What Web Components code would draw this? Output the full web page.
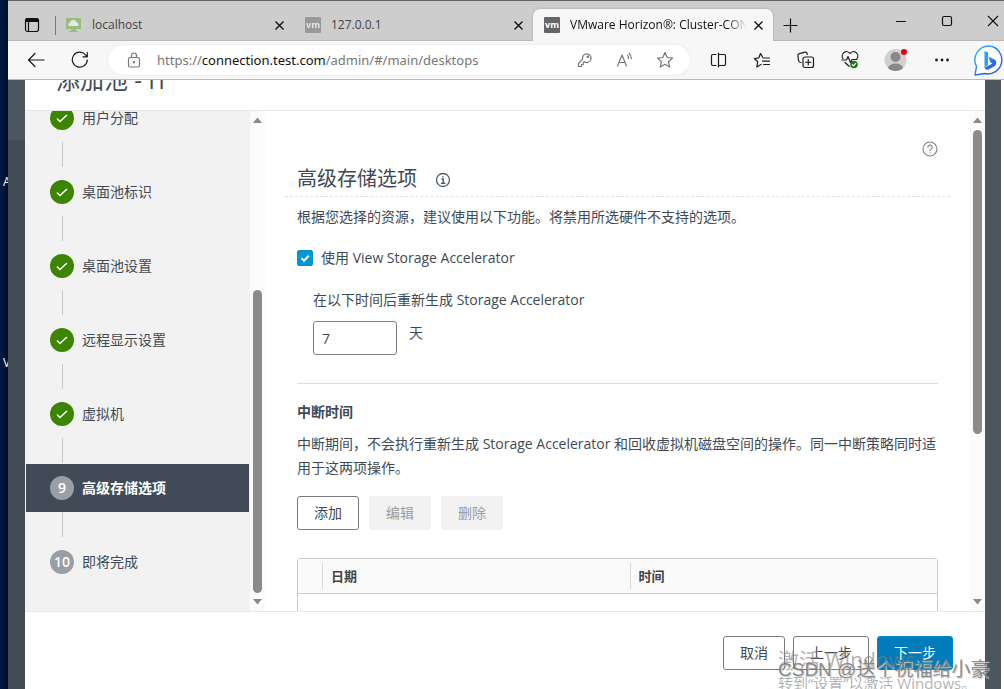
<!DOCTYPE html>
<html lang="zh-CN">
<head>
<meta charset="utf-8">
<title>VMware Horizon</title>
<style>
  html, body { margin: 0; height: 100%; }
  body {
    display: flex; overflow: hidden; background: #fff; color: #404a56;
    font: 14px/24px "Open Sans", "Noto Sans CJK SC", sans-serif;
  }
</style>
</head>
<body>
<desktop-edge></desktop-edge>
<browser-window>
  <tab-strip slot="tabs">
    <browser-tab kind="desktop" class="first">localhost</browser-tab>
    <browser-tab kind="vm">127.0.0.1</browser-tab>
    <browser-tab kind="vm" active>VMware Horizon®: Cluster-CONNECTION</browser-tab>
  </tab-strip>
  <nav-toolbar slot="toolbar"></nav-toolbar>
  <pool-wizard>
    <span slot="title">添加池 - IT</span>
    <wizard-step slot="steps" state="done">用户分配</wizard-step>
    <wizard-step slot="steps" state="done">桌面池标识</wizard-step>
    <wizard-step slot="steps" state="done">桌面池设置</wizard-step>
    <wizard-step slot="steps" state="done">远程显示设置</wizard-step>
    <wizard-step slot="steps" state="done">虚拟机</wizard-step>
    <wizard-step slot="steps" number="9" state="current">高级存储选项</wizard-step>
    <wizard-step slot="steps" number="10" state="last">即将完成</wizard-step>
    <storage-options></storage-options>
    <ui-button slot="footer">取消</ui-button>
    <ui-button slot="footer">上一步</ui-button>
    <ui-button slot="footer" kind="primary">下一步</ui-button>
  </pool-wizard>
</browser-window>
<screen-watermark></screen-watermark>

<script>
const define = (name, html, setup) => {
  const template = document.createElement('template');
  template.innerHTML = html;
  customElements.define(name, class extends HTMLElement {
    constructor() {
      super();
      this.attachShadow({ mode: 'open' }).append(template.content.cloneNode(true));
    }
    connectedCallback() { if (setup) setup(this, this.shadowRoot); }
  });
};

define('desktop-edge', `
<style>
  :host { position: relative; flex: none; width: 8px; overflow: hidden; color: #fff;
    background: linear-gradient(90deg, #001a42, #000f2a); font: 12px/16px "Open Sans", sans-serif; }
  span { position: absolute; left: 3px; }
</style>
<span style="top:174px">A</span><span style="top:355px">V</span>`);

define('browser-window', `
<style>
  :host { flex: 1; min-width: 0; display: flex; flex-direction: column; border-top: 1px solid #656366; }
</style>
<slot name="tabs"></slot><slot name="toolbar"></slot><slot></slot>`);

define('tab-strip', `
<style>
  :host { display: flex; flex: none; height: 40px; background: #cdcdcd; box-shadow: inset 0 -1px #b9b9b9; color: #111; font: 12px/16px "Open Sans", sans-serif; }
  button { border: 0; padding: 0; background: none; color: inherit; display: flex; align-items: center; justify-content: center; }
  .menu { width: 47px; padding-top: 8px; }
  .add { width: 35px; padding-top: 8px; }
  .window { margin-left: auto; display: flex; flex: none; margin-right: -12px; }
  .window button { width: 46px; }
  svg { display: block; fill: none; stroke: #111; }
</style>
<button class="menu" aria-label="标签页菜单"><svg width="16" height="16"><rect x="1.5" y="1.5" width="13" height="13" rx="2.2" stroke-width="1.2"/><path d="M1 3.8Q1 1 3.8 1h8.400Q15 1 15 3.800V5H1z" fill="#111" stroke="none"/><path d="M4.500 5v9.500" stroke-width="1.200"/></svg></button>
<slot></slot>
<button class="add" aria-label="新建标签页"><svg width="15" height="15"><path d="M7.500 .5v14M.5 7.500h14" stroke-width="1.200"/></svg></button>
<div class="window">
  <button aria-label="最小化"><svg width="12" height="12"><path d="M1 6.500h10"/></svg></button>
  <button aria-label="最大化"><svg width="12" height="12"><rect x="1.500" y="1.500" width="9" height="9" rx="1.500" stroke-width="1.200"/></svg></button>
  <button aria-label="关闭"><svg width="12" height="12"><path d="M1 1l10 10M11 1L1 11" stroke-width="1.100"/></svg></button>
</div>`);

define('browser-tab', `
<style>
  :host { display: flex; align-items: center; box-sizing: border-box; flex: 0 1 239px; min-width: 0; height: 32px;
    margin-top: 8px; padding: 0 9px 0 11px; color: #444; position: relative; }
  :host(.first)::before { content: ""; position: absolute; left: 0; top: 7px; height: 19px; border-left: 1px solid #777; }
  :host([active]) { flex-basis: 240px; background: #f7f7f7; border-radius: 7px 7px 0 0; color: #111; box-shadow: 0 0 2px #999; clip-path: inset(-3px -3px 0 -3px); }
  .icon { flex: none; width: 16px; height: 16px; opacity: .5; }
  :host([active]) .icon { opacity: 1; }
  .label { flex: 1; min-width: 0; overflow: hidden; white-space: nowrap; margin: 0 6px 0 10px; }
  :host([active]) .label { -webkit-mask-image: linear-gradient(90deg, #000 calc(100% - 20px), transparent); }
  button { flex: none; border: 0; background: none; padding: 0; width: 11px; height: 11px; }
  svg { display: block; }
</style>
<span class="icon"></span><span class="label"><slot></slot></span>
<button aria-label="关闭标签页"><svg width="11" height="11"><path d="M1.500 1.500l8 8M9.500 1.500l-8 8" stroke="#111" stroke-width="1.400"/></svg></button>`,
(host, root) => {
  root.querySelector('.icon').innerHTML = host.getAttribute('kind') === 'vm'
    ? '<svg width="16" height="16"><rect width="16" height="16" rx="1" fill="#666"/><text x="8" y="10.500" text-anchor="middle" font-family="Open Sans" font-weight="700" font-size="9" fill="#fff">vm</text></svg>'
    : '<svg width="16" height="16"><path d="M0 1h15v11H10v2h2v1H3v-1h2v-2H0z" fill="#5fb030"/><path d="M3 9a2 2 0 0 1 1-3.500 3.500 3.500 0 0 1 6.800 0A2 2 0 0 1 12 9z" fill="#fff"/></svg>';
});

define('nav-toolbar', `
<style>
  :host { display: flex; align-items: center; flex: none; height: 38px; background: #f7f7f7; border-bottom: 1px solid #b9b9b9; padding-left: 6px; }
  button { flex: none; border: 0; background: none; padding: 0; width: 44px; height: 30px; display: flex; align-items: center; justify-content: center; }
  .wide { width: 46px; }
  .bing { width: 40px; justify-content: flex-end; height: 34px; }
  form { flex: 1; min-width: 0; display: flex; align-items: center; margin: 0 6px; height: 30px; border-radius: 15px; background: #fff; box-shadow: 0 0 3px #e4e4e4; padding: 0 5px 0 18px; }
  form button { width: 40px; }
  form .lock { width: 16px; }
  .url { flex: 1; min-width: 0; margin-left: 15px; color: #767676; text-decoration: none; white-space: nowrap; overflow: hidden; font: 13px/20px "Noto Sans", sans-serif; }
  b { font-weight: 400; color: #111; }
  svg { display: block; fill: none; stroke: #1b1b1b; stroke-width: 1.200; stroke-linecap: round; stroke-linejoin: round; }
  form svg { stroke: #777; }
</style>
<button aria-label="后退"><svg width="18" height="18"><path d="M17 9H1.500M8 2.500L1.500 9 8 15.500"/></svg></button>
<button aria-label="刷新"><svg width="18" height="18"><path d="M16.300 9A7.500 7.500 0 1 1 14.500 3.800L16 5.500M16.300 1.500v4.300H12"/></svg></button>
<form>
  <button type="button" class="lock" aria-label="站点信息"><svg width="14" height="17"><rect x="1.500" y="5.500" width="11" height="9.500" rx="1.500"/><path d="M4.500 5.500V3.500a2.500 2.500 0 0 1 5 0v2"/><circle cx="7" cy="10.200" r=".6" fill="#555"/></svg></button>
  <a class="url" href="#/main/desktops">https://<b>connection.test.com</b>/admin/#/main/desktops</a>
  <button type="button" aria-label="密码"><svg width="16" height="16" stroke-width="1"><path d="M7 9.500A4.300 4.300 0 1 0 5.600 7.200L1.500 11.500v3h3v-2h1.800v-1.700z"/><circle cx="10.800" cy="4.700" r=".7"/></svg></button>
  <button type="button" aria-label="朗读"><svg width="18" height="16"><path d="M1.500 14L6 3l4.500 11M3 10.500h6M11.500 3.300a4 4 0 0 1 1 3.200M13 1.300a7 7 0 0 1 2.300 5.500"/></svg></button>
  <button type="button" aria-label="收藏"><svg width="18" height="18"><path d="M9 1.500l2.200 5 5.300.6-4 3.600 1.200 5.400L9 13.300l-4.700 2.800 1.200-5.400-4-3.600 5.300-.6z"/></svg></button>
</form>
<button aria-label="分屏"><svg width="17" height="16"><path d="M6 2.500H3A1.500 1.500 0 0 0 1.500 4v8A1.500 1.500 0 0 0 3 13.500h3M8.500 1v14M8.500 2.500H14A1.500 1.500 0 0 1 15.500 4v8a1.500 1.500 0 0 1-1.500 1.500H8.500"/></svg></button>
<button aria-label="收藏夹"><svg width="18" height="17"><path d="M9.500 5L7.500 1.500 5.800 5.800 1.300 6.500l3.400 3.200-.9 5.300L8 12.600M10 6h6.500M9.500 9.200h7M10.500 12.500h6"/></svg></button>
<button aria-label="集锦"><svg width="18" height="18"><path d="M4 11.500l-1-.3Q1.800 10.800 1.600 9.500L.9 4.500Q.8 3 2.300 2.600L8 1.200Q9.500 1 10 2.300L10.300 3.500"/><rect x="6" y="6" width="10.500" height="10.500" rx="2"/><path d="M11.250 8.500v5.500M8.500 11.250H14"/></svg></button>
<button aria-label="性能"><svg width="18" height="18"><path d="M2 7.500a4 4 0 0 1 7-5 4 4 0 0 1 7 5M1 9h4.500L7 5.500l2.500 6L11 8.500h5M4 11.500L8 15.300"/><circle cx="13" cy="13.500" r="3.800" fill="#137a13" stroke="none"/><path d="M11.300 13.700l1.200 1.200 2.200-2.600" stroke="#fff"/></svg></button>
<button class="wide" aria-label="个人资料"><svg width="24" height="26"><defs><clipPath id="c"><circle cx="12.500" cy="13" r="11"/></clipPath></defs><g stroke="none"><circle cx="12.500" cy="13" r="11" fill="#d2d0ce"/><g clip-path="url(#c)" fill="#8a8886"><circle cx="12.500" cy="10" r="5"/><ellipse cx="12.500" cy="21.500" rx="7.500" ry="5"/></g><circle cx="21" cy="5" r="3" fill="#e20010"/></g></svg></button>
<button class="wide" aria-label="更多"><svg width="16" height="4"><g fill="#1b1b1b" stroke="none"><circle cx="3.500" cy="2" r="1.400"/><circle cx="9" cy="2" r="1.400"/><circle cx="14.500" cy="2" r="1.400"/></g></svg></button>
<button class="bing" aria-label="必应"><svg width="30" height="31"><defs><linearGradient id="g" x1="0" y1="0" x2="1" y2="1"><stop offset="0" stop-color="#35c2f5"/><stop offset=".6" stop-color="#2768e6"/><stop offset="1" stop-color="#3052d8"/></linearGradient></defs><path d="M15.500 1a14 14 0 1 1-5 27.500L1 30l1.500-8.500A14 14 0 0 1 15.500 1z" fill="#fff" stroke="url(#g)" stroke-width="1.400"/><path d="M10.500 6l3.500 1.500V20l-3.500 3z" fill="#2f9df0" stroke="none"/><path d="M14.500 11.500l5.500 2.700q2.700 1.500 2.200 4.300-.4 2-2.200 3L14.500 24.500q-3 1-4-1.700l8-4.300-2.500-1.500z" fill="url(#g)" stroke="none"/></svg></button>`);

define('pool-wizard', `
<style>
  :host { flex: 1; min-height: 0; display: flex; margin-right: 3px; padding: 0 16px 0 17px;
    background: linear-gradient(#4b565f, #4b565f) right / 16px 100% no-repeat, linear-gradient(#4b565f 60px, #434c55 60px); }
  section { flex: 1; min-width: 0; display: flex; flex-direction: column; background: #fff; }
  header { flex: none; height: 30px; overflow: hidden; display: flex; align-items: flex-end; border-bottom: 1px solid #e8e8e8; }
  h1 { margin: 0; padding: 0 31px 12px; font-size: 24px; line-height: 36px; font-weight: 400; }
  .body { flex: 1; min-height: 0; display: flex; }
  nav { flex: 0 0 225px; display: flex; flex-direction: column; justify-content: flex-end; overflow: hidden; background: #f2f2f2; box-sizing: border-box; padding: 0 1px 25px; }
  main { flex: 1; min-width: 0; overflow: hidden; }
  footer { flex: none; display: flex; justify-content: flex-end; gap: 8px; padding: 24px 32px 19px; border-top: 1px solid #e8e8e8; }
</style>
<section>
  <header><h1><slot name="title"></slot></h1></header>
  <div class="body">
    <nav><slot name="steps"></slot></nav>
    <scroll-track style="--before:161;--thumb:303;--after:0"></scroll-track>
    <main><slot></slot></main>
    <scroll-track style="--before:1;--thumb:304;--after:159"></scroll-track>
  </div>
  <footer><slot name="footer"></slot></footer>
</section>`);

define('scroll-track', `
<style>
  :host { flex: 0 0 15px; box-sizing: border-box; display: flex; flex-direction: column; align-items: center; background: #fbfbfb; }
  svg { flex: none; display: block; fill: #8a8a8a; }
  i { flex: var(--before) 0 0; }
  i + b { flex: var(--thumb) 0 0; width: 9px; border-radius: 5px; background: #8b8b8b; }
  b + i { flex-grow: var(--after); }
</style>
<svg width="9" height="18"><path d="M4.500 6.500L9 12H0z"/></svg><i></i><b></b><i></i><svg width="9" height="18"><path d="M0 6h9L4.500 11.500z"/></svg>`);

define('wizard-step', `
<style>
  :host { display: block; flex: none; }
  button { display: flex; align-items: center; gap: 8px; width: 100%; height: 48px; border: 0; padding: 0 24px; background: none; font: inherit; color: inherit; text-align: left; }
  .mark { flex: none; width: 24px; height: 24px; border-radius: 50%; background: #9a9fa6; color: #fff; text-align: center; font: 600 14px/24px "Open Sans", sans-serif; }
  :host([state="done"]) .mark { background: #3c8500; }
  :host([state="current"]) button { background: #414b57; color: #fff; font-weight: 700; }
  .line { height: 25px; width: 1px; margin: 0 0 1px 36px; background: #c6c9cc; }
  :host([state="last"]) .line { display: none; }
  svg { display: block; }
</style>
<button type="button"><span class="mark"></span><span><slot></slot></span></button><div class="line"></div>`,
(host, root) => {
  const mark = root.querySelector('.mark');
  if (host.getAttribute('state') === 'done')
    mark.innerHTML = '<svg width="24" height="24"><path d="M7 12.500l3 3L17 9" fill="none" stroke="#fff" stroke-width="1.500"/></svg>';
  else mark.textContent = host.getAttribute('number');
});

define('ui-button', `
<style>
  :host { display: block; }
  button { display: block; box-sizing: border-box; margin: 0; min-width: 62px; height: 34px; padding: 0 16px; border: 1px solid #777c82; border-radius: 3px; background: #fff; color: #404a56; font: inherit; line-height: 32px; }
  :host([kind="primary"]) button { background: #007cbb; border-color: #0088c8; color: #fff; }
  :host([disabled]) button { background: #f2f2f2; border-color: #f2f2f2; color: #9a9da1; }
</style>
<button type="button"><slot></slot></button>`,
(host, root) => { root.querySelector('button').disabled = host.hasAttribute('disabled'); });

define('storage-options', `
<style>
  :host { display: block; padding: 26px 32px 0; }
  .help { height: 24px; display: flex; justify-content: flex-end; align-items: center; }
  .icon { border: 0; padding: 0; background: none; }
  svg { display: block; fill: none; stroke: #505a66; stroke-width: 1.200; stroke-linecap: round; }
  .help svg { stroke: #7b838c; stroke-width: 1.100; }
  .heading { display: flex; align-items: center; gap: 18px; height: 35px; margin: 0 -12px; padding: 0 12px; border-bottom: 1px dashed #dfe1e3; }
  h2 { margin: 0; font-size: 20px; line-height: 32px; font-weight: 400; }
  p { margin: 8px 0 16px; }
  .check { display: flex; align-items: center; gap: 8px; height: 26px; margin-bottom: 16px; }
  .check input { appearance: none; margin: 0; width: 16px; height: 16px; border-radius: 2px; border: 1px solid #0095d3; }
  .check input:checked { background: #0095d3 url("data:image/svg+xml,%3Csvg xmlns='http://www.w3.org/2000/svg' width='14' height='14'%3E%3Cpath d='M3.500 7.200l2.500 2.500 4.800-5' fill='none' stroke='white' stroke-width='2'/%3E%3C/svg%3E"); }
  .period { padding-left: 16px; }
  .period label { display: block; line-height: 26px; margin-bottom: 8px; }
  .row { display: flex; gap: 12px; }
  .row input { box-sizing: border-box; width: 84px; height: 34px; border: 1px solid #7c8187; border-radius: 3px; padding: 0 8px; font: inherit; color: inherit; background: #fff; }
  hr { border: 0; border-top: 1px solid #dcdcdc; margin: 28px 0 16px; }
  h3 { margin: 0; font-size: 14px; line-height: 24px; font-weight: 700; }
  .actions { display: flex; gap: 10px; margin-bottom: 28px; }
</style>
<div class="help"><button class="icon" aria-label="帮助"><svg width="16" height="16"><circle cx="8" cy="8" r="7"/><path d="M5.800 6.300a2.200 2.200 0 1 1 3.300 1.900Q8 8.800 8 9.800M8 11.800v.2"/></svg></button></div>
<div class="heading"><h2>高级存储选项</h2><button class="icon" aria-label="信息"><svg width="16" height="18"><circle cx="8" cy="10" r="6.500" stroke-width="1.300"/><path d="M7 9h1.200v4M6.500 13.300h3.400M8 6.800v.2" stroke-width="1.400"/></svg></button></div>
<p>根据您选择的资源，建议使用以下功能。将禁用所选硬件不支持的选项。</p>
<div class="check"><input type="checkbox" id="accelerator" checked><label for="accelerator">使用 View Storage Accelerator</label></div>
<div class="period"><label for="days">在以下时间后重新生成 Storage Accelerator</label><div class="row"><input id="days" type="text" value="7"><span>天</span></div></div>
<hr>
<h3>中断时间</h3>
<p>中断期间，不会执行重新生成 Storage Accelerator 和回收虚拟机磁盘空间的操作。同一中断策略同时适用于这两项操作。</p>
<div class="actions"><ui-button>添加</ui-button><ui-button disabled>编辑</ui-button><ui-button disabled>删除</ui-button></div>
<blackout-table></blackout-table>`);

define('blackout-table', `
<style>
  :host { display: block; border: 1px solid #ccc; border-radius: 3px; }
  table { width: 100%; table-layout: fixed; border-collapse: collapse; }
  .pick { width: 24px; }
  th { height: 34px; padding: 0; text-align: left; font: inherit; font-size: 13px; font-weight: 600; color: #444; background: #fafafa; border-bottom: 1px solid #ccc; }
  th span { display: block; line-height: 26px; padding-left: 8px; border-left: 1px solid #d8d8d8; }
  td { height: 72px; }
</style>
<table>
  <thead><tr><th class="pick"></th><th><span>日期</span></th><th><span>时间</span></th></tr></thead>
  <tbody><tr><td></td><td></td><td></td></tr></tbody>
</table>`);

define('screen-watermark', `
<style>
  :host { position: absolute; right: 0; bottom: 0; width: 226px; height: 42px; pointer-events: none; white-space: nowrap; overflow: hidden; }
  span { position: absolute; left: 0; }
  .os { top: 1px; font-size: 21px; line-height: 24px; color: rgba(125,125,125,.6); }
  .hint { top: 26px; font-size: 15px; line-height: 20px; color: rgba(125,125,125,.6); }
  .author { top: 11px; font: 19px/24px "Liberation Sans", "Noto Sans CJK SC", sans-serif; color: rgba(115,115,115,.8); text-shadow: 1px 1px 1px #ccc; }
</style>
<span class="os">激活 Windows</span><span class="hint">转到“设置”以激活 Windows。</span><span class="author">CSDN @送个祝福给小豪</span>`);
</script>
</body>
</html>
